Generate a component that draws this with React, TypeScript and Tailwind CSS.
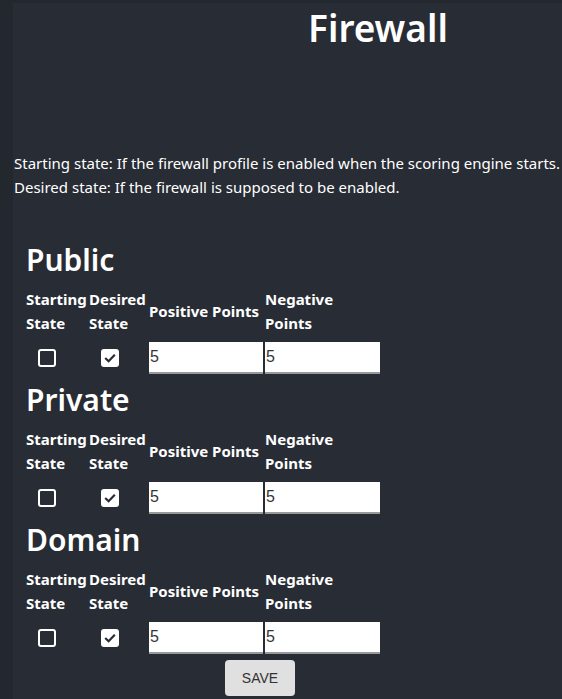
import React from "react";

function Unchecked() {
  return <div className="w-[18px] h-[18px] rounded-[3px] border-2 border-white box-border" />;
}

function Checked() {
  return (
    <div className="w-[18px] h-[18px] rounded-[3px] bg-white flex items-center justify-center">
      <svg width="14" height="14" viewBox="0 0 14 14">
        <path d="M2.2 7 L5.6 10.2 L11.8 3.8" fill="none" stroke="#282c34" strokeWidth="2.2" />
      </svg>
    </div>
  );
}

function Section({ name }: { name: string }) {
  return (
    <div className="flex flex-col mb-[3px]">
      <h2 className="text-[30px] leading-[40px] font-semibold pl-[13px] mt-[1px]">{name}</h2>
      <div className="grid grid-cols-[63px_60px_116px_116px] pl-[13px] mt-[7px]">
        <div className="font-bold text-[15px] leading-[24px] flex items-center">
          <span>Starting<br />State</span>
        </div>
        <div className="font-bold text-[15px] leading-[24px] flex items-center">
          <span>Desired<br />State</span>
        </div>
        <div className="font-bold text-[15px] leading-[24px] flex items-center">
          <span>Positive Points</span>
        </div>
        <div className="font-bold text-[15px] leading-[24px] flex items-center">
          <span>Negative<br />Points</span>
        </div>
        <div className="h-[41px] pt-[4px] flex items-center pl-[12px]">
          <Unchecked />
        </div>
        <div className="h-[41px] pt-[4px] flex items-center pl-[12px]">
          <Checked />
        </div>
        <div className="h-[41px] pt-[4px] flex items-center">
          <input
            defaultValue="5"
            className="w-[114px] h-[32px] bg-white text-[#333] pl-[1px] text-[16px] border-b-2 border-[#999] outline-none"
            style={{ fontFamily: '"Liberation Sans", Arial, sans-serif' }}
          />
        </div>
        <div className="h-[41px] pt-[4px] flex items-center">
          <input
            defaultValue="5"
            className="w-[115px] h-[32px] bg-white text-[#333] pl-[1px] text-[16px] border-b-2 border-[#999] outline-none"
            style={{ fontFamily: '"Liberation Sans", Arial, sans-serif' }}
          />
        </div>
      </div>
    </div>
  );
}

export default function App() {
  return (
    <div
      className="w-[562px] h-[699px] overflow-hidden bg-[#23272e] flex text-white"
      style={{ fontFamily: '"Noto Sans", "Open Sans", sans-serif' }}
    >
      <div className="w-[13px] shrink-0" />
      <div className="flex-1 bg-[#282c34] mt-[3px] flex flex-col overflow-hidden">
        <h1 className="pl-[295px] text-[37px] leading-[50px] font-semibold">Firewall</h1>
        <div className="mt-[98px] text-[15px] leading-[24px] pl-[1px]">
          <p>Starting state: If the firewall profile is enabled when the scoring engine starts.</p>
          <p>Desired state: If the firewall is supposed to be enabled.</p>
        </div>
        <div className="mt-[40px] flex flex-col">
          <Section name="Public" />
          <Section name="Private" />
          <Section name="Domain" />
        </div>
        <div className="flex justify-center w-[494px] mt-[1px]">
          <button
            className="w-[70px] h-[36px] rounded-[4px] bg-[#e0e0e0] text-[#333] text-[14px]"
            style={{ fontFamily: '"Liberation Sans", Arial, sans-serif' }}
          >
            SAVE
          </button>
        </div>
      </div>
    </div>
  );
}
